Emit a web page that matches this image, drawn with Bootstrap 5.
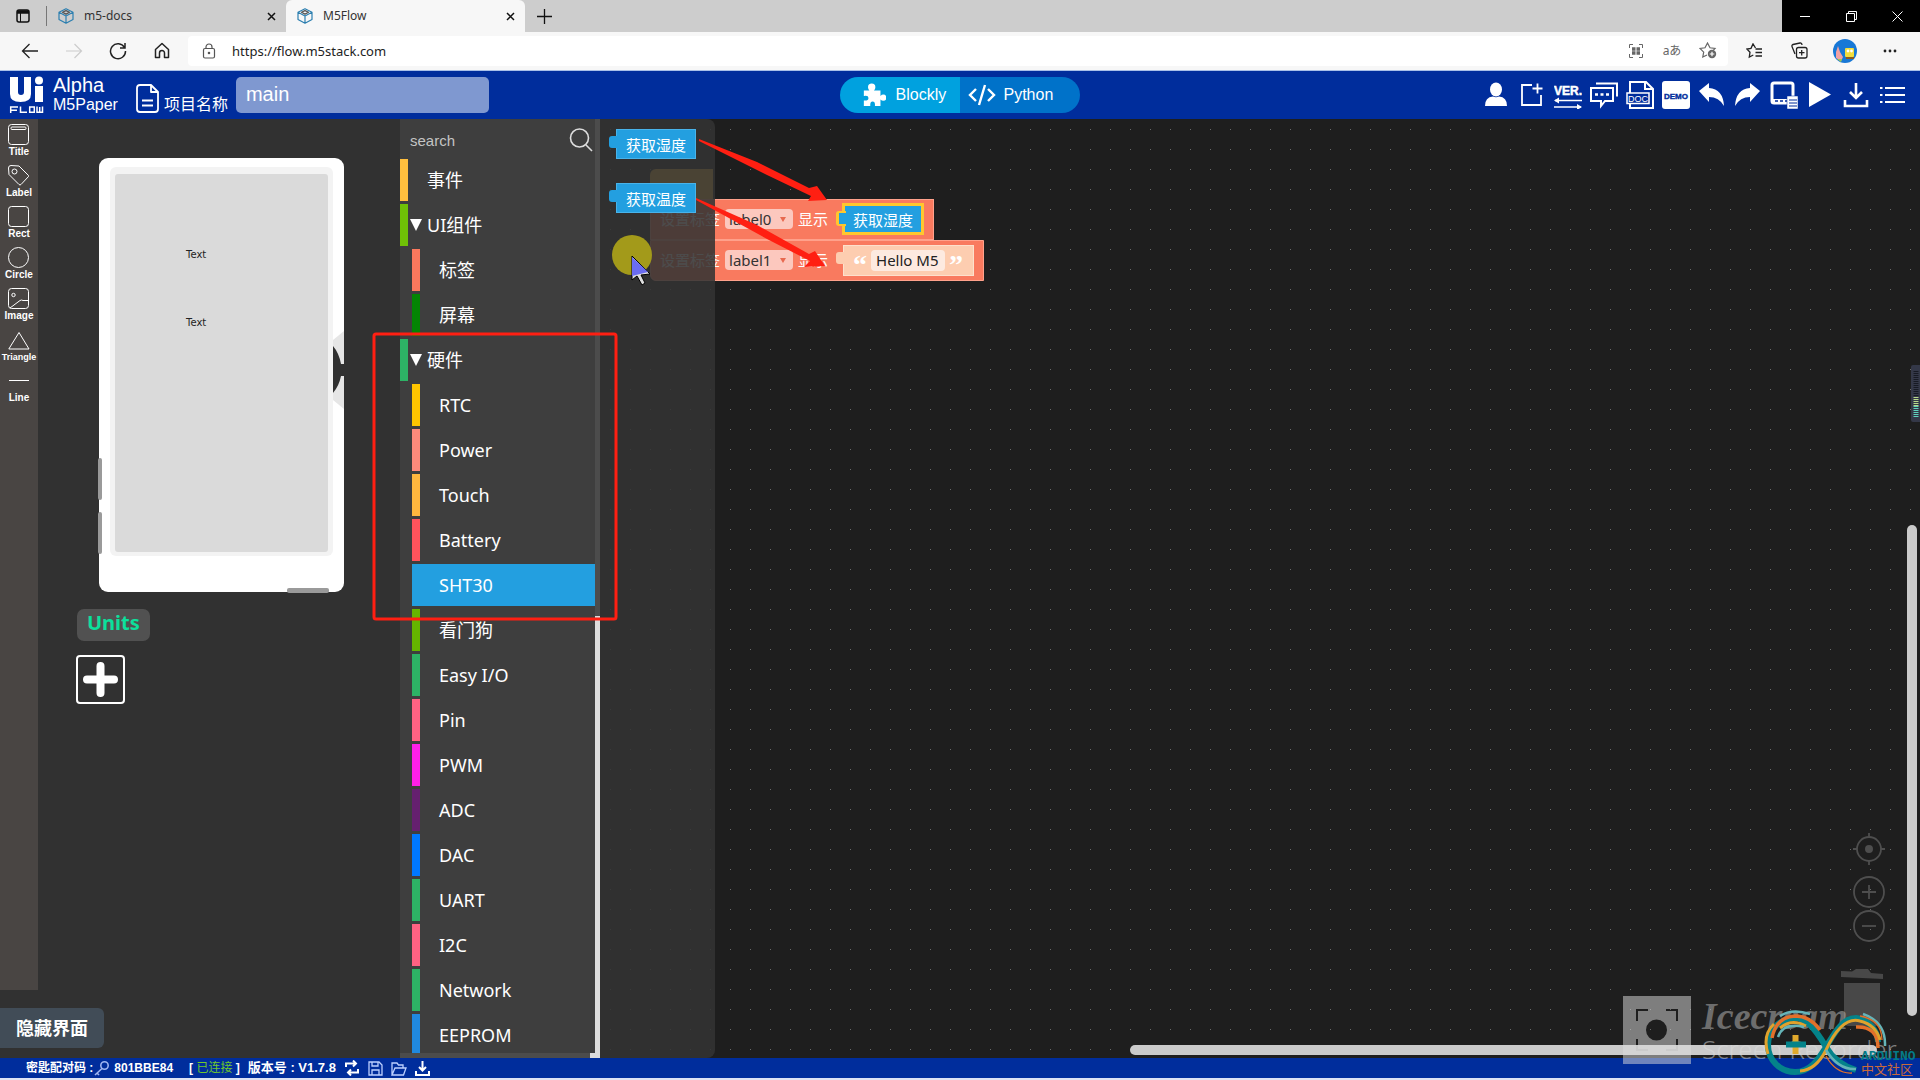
<!DOCTYPE html>
<html lang="zh-CN">
<head>
<meta charset="utf-8">
<meta name="viewport" content="width=device-width, initial-scale=1">
<title>M5Flow</title>
<link rel="stylesheet" href="https://cdn.jsdelivr.net/npm/bootstrap@5.3.0/dist/css/bootstrap.min.css">
<script src="https://cdn.jsdelivr.net/npm/bootstrap@5.3.0/dist/js/bootstrap.bundle.min.js"></script>
<style>
  :root{--ui:"Noto Sans","Noto Sans CJK SC",sans-serif;--arial:"Liberation Sans","Noto Sans CJK SC",sans-serif}
  body{height:100vh;overflow:hidden;background:#1e1e1e;font-family:var(--ui);font-size:12px;line-height:16px}
  svg{display:block;flex:none}
  svg:not([fill]){fill:none}
  svg:not([stroke]){stroke:currentColor}
  button,input{font-family:inherit}
  .plain{background:none;border:0;padding:0;color:inherit;display:flex;align-items:center;justify-content:center}
  /* browser frame */
  .tabstrip{height:32px;background:#cdcdcd;color:#111}
  .tabstrip .lead-btn{width:47px;border-right:1px solid #777;margin:6px 0}
  .tab-item{width:239px;padding:0 10px 0 11px;gap:10px}
  .tab-item.on{background:#f7f7f7;border-radius:6px 6px 0 0}
  .tab-item span{color:#333}
  .winctl{background:#000;color:#fff}
  .winctl button{width:46px;height:32px}
  .toolbar{height:39px;background:#f7f7f7;border-bottom:1px solid #a9c0e8;color:#222}
  .toolbar .nav-b{width:44px}
  .address{height:30px;background:#fff;border-radius:4px;padding:0 2px 0 14px}
  .address input{border:0;outline:0;background:none;font-size:13px;color:#222;padding:0;margin-left:16px}
  .address .small-ic{width:36px;color:#666}
  .rightset{width:192px;padding:0 6px 0 4px}
  .rightset button{width:45px}
  /* app header */
  .apphead{height:48px;background:#002d9c;color:#fff;font-family:var(--arial);padding:0 10px 0 9px}
  .apphead .side{flex:1 1 0}
  .brand{margin:0 18px 0 9px}
  .brand-a{font-size:20px;line-height:20px}
  .brand-b{font-size:16px;line-height:20px}
  .proj{font-size:16px;line-height:20px;padding-top:20px}
  .projname{width:253px;height:36px;border:0;border-radius:5px;background:#7f98d0;color:#fff;font-size:20px;padding:0 10px}
  .mode{width:240px;height:36px;border-radius:18px;overflow:hidden;font-size:16px}
  .mode button{width:120px;color:#fff;justify-content:flex-start}
  .mode .b1{background:#00a1df;padding-left:22px;gap:10px}.mode .b2{background:#0072c9;padding-left:8px;gap:8px}
  .icons button{width:36px;height:36px}
  /* left side */
  .shapes{width:38px;background:#494543;color:#fff;font:bold 10px/12px var(--arial);padding-top:5px;margin-bottom:68px}
  .shapes button{height:41px;flex-direction:column;justify-content:flex-start;font:inherit}
  .designer{width:362px;background:#313131}
  .device{width:245px;height:434px;margin:39px 0 0 61px;background:#fff;border-radius:9px;padding:9px 11px 36px;position:relative}
  .bezel{background:#f3f3f3;border-radius:6px;padding:7px 5px 4px;height:389px}
  .screen{background:#dadada;border-radius:3px;height:378px;position:relative;color:#222;font:10px/12px "DejaVu Sans",sans-serif}
  .screen span{position:absolute;left:71px}
  .screen .t0{top:75px}.screen .t1{top:143px}
  .keyp{position:absolute;background:#9a9a9a;border-radius:2px}
  .k1{left:-1px;top:300px;width:4px;height:42px}.k2{left:-1px;top:354px;width:4px;height:42px}.k3{left:188px;top:430px;width:42px;height:5px}
  .wheel{position:absolute;right:0;top:173px}
  .units{background:#515151;border-radius:7px;color:#0ce09c;font-weight:700;font-size:20px;line-height:28px;padding:0 10px 4px;margin:17px 0 14px 39px;align-self:flex-start}
  .addunit{width:49px;height:49px;border:2px solid #fff;border-radius:4px;margin-left:38px;color:#fff}
  .hide-ui{position:absolute;left:0;bottom:10px;width:104px;height:40px;background:#414c57;color:#fff;border-radius:0 6px 6px 0;font-size:18px;font-weight:700}
  .designer-wrap{position:relative;background:#313131}
  /* toolbox */
  .toolbox{width:200px;background:#3e3e3e;color:#fff;position:relative}
  .searchrow{height:40px;padding:3px 7px 0 10px}
  .searchrow input{min-width:0;background:none;border:0;outline:0;color:#fff;font:15px var(--arial);padding:0}
  .searchrow input::placeholder{color:#c4c4c4;opacity:1}
  .cats{overflow:hidden;gap:3px;margin-bottom:5px;border-radius:0}
  .cats .cat{flex:none;height:42px;border:0;border-left:8px solid var(--c);background:none;color:#fff;font-size:18px;line-height:40px;text-align:left;padding:0 0 0 19px;margin-right:5px}
  .cats .sub{margin-left:12px}
  .cats .open{position:relative}
  .cats .open::before{content:"";position:absolute;left:2px;top:15px;border:6px solid transparent;border-top:12px solid #fff;border-bottom:0}
  .cats .sel{background:#239fe0}
  .vbar{position:absolute;right:0;top:0;bottom:0;width:5px;background:#4c4c4c;overflow:hidden}
  .vbar i{display:block;margin-top:497px;height:100%;background:#dcdcdc}
  .hbar{position:absolute;left:0;right:5px;bottom:0;height:5px;background:#4c4c4c;border-right:5px solid #dcdcdc}
  /* workspace */
  .ws{position:relative;overflow:hidden;background:#1e1e1e conic-gradient(at 1px 1px,transparent 75%,#6a6a6a 0) 10px 10px/20px 20px;min-width:0}
  .blk{position:absolute;display:flex;align-items:center;font-size:15px;white-space:nowrap;color:#fff}
  .hat{left:50px;top:50px;width:63px;height:31px;background:#e8b53e;border-radius:6px 0 0 0}
  .stmt{background:#f97a5f;border:1px solid #ffa18b;gap:5px;padding-left:9px}
  .s1{left:50px;top:80px;width:284px;height:41px}
  .s2{left:50px;top:121px;width:334px;height:41px;border-radius:0 0 0 6px}
  .fld{background:#fcc8be;border-radius:4px;color:#333;height:20px;width:68px;padding:0 7px 0 4px;font-size:15px;line-height:20px;border:0;display:flex;align-items:center;justify-content:space-between}
  .fld::after{content:"";border:3px solid transparent;border-top:5px solid #e8694f;border-bottom:0}
  .val{position:relative;background:#239fe0;border:1px solid #48b3ea;height:30px;padding:2px 10px 0;display:flex;align-items:center;font-size:15px;color:#fff}
  .val::before{content:"";position:absolute;left:-8px;top:6px;width:8px;height:12px;background:inherit;border-radius:3px 0 0 3px}
  .hot{outline:3px solid #ffc72e;outline-offset:-1px;margin-left:11px;height:28px;width:78px;padding:2px 8px 0}
  .hot::before{border:solid #ffc72e;border-width:2px 0 2px 3px;left:-9px;height:15px;top:5px;width:10px}
  .str{background:#fdcdb0;border-color:#fde0cc;margin-left:10px;width:131px;height:31px;gap:4px;padding:0 9px;font:bold 28px/30px "Liberation Serif",serif}
  .str q{quotes:none;height:18px;line-height:28px}
  .str input{width:74px;height:21px;border:0;border-radius:4px;background:#fdeae0;color:#222;font:15px var(--ui);padding:0 0 0 5px}
  .flyout{position:absolute;left:0;top:0;bottom:0;width:115px;background:rgba(51,51,51,.88);border-radius:0 8px 8px 0}
  .flyout .val{position:absolute;left:16px;width:80px;padding:2px 9px 0}
  .flyout .f1{top:10px}.flyout .f2{top:64px}
  .wsv{position:absolute;right:3px;top:406px;bottom:42px;width:10px;border-radius:5px;background:#cbcbcb}
  .wsh{position:absolute;right:43px;left:530px;bottom:3px;height:10px;border-radius:5px;background:#cbcbcb}
  .zooms{position:absolute;right:35px;bottom:115px;color:#4e4e4e}
  .trash{position:absolute;right:36px;bottom:30px}
  .meter{position:absolute;right:0;top:246px}
  .notes{position:absolute;left:0;top:0;pointer-events:none}
  /* footer */
  .foot{height:22px;background:#002d9c;border-bottom:2px solid #dde3f4;color:#fff;font:bold 12px/18px var(--arial);padding-left:26px}
  .marks{position:absolute;right:0;bottom:0;width:320px;height:100px;pointer-events:none}
</style>
</head>
<body class="d-flex flex-column">
<svg width="0" height="0" class="position-absolute"><defs>
  <g id="cube" fill="none" stroke="#2c7fb0" stroke-width="1.2" stroke-linejoin="round"><path d="M8 .8 15 4.300v7.200L8 15.200 1 11.500V4.300zM1 4.300 8 8l7-3.700M8 8v7.200"/><path d="M4.500 4.300 8 2.600l3.500 1.700L8 6.100z" stroke="#555"/></g>
  <g id="cross" stroke="#111" stroke-width="1.500"><path d="M1 1l7 7M8 1 1 8"/></g>
</defs></svg>

<div class="tabstrip d-flex">
  <button class="plain lead-btn" aria-label="标签页操作"><svg width="14" height="14"><rect x="1" y="1" width="12" height="12" rx="2" stroke-width="1.500"/><path d="M1 3h12" stroke-width="3.500"/><path d="M4.500 3v10"/></svg></button>
  <div class="tab-item d-flex align-items-center"><svg width="16" height="16"><use href="#cube"/></svg><span class="flex-grow-1 ms-0">m5-docs</span><button class="plain" aria-label="关闭"><svg width="9" height="9"><use href="#cross"/></svg></button></div>
  <div class="tab-item on d-flex align-items-center"><svg width="16" height="16"><use href="#cube"/></svg><span class="flex-grow-1">M5Flow</span><button class="plain" aria-label="关闭"><svg width="9" height="9"><use href="#cross"/></svg></button></div>
  <button class="plain px-2 ms-1" aria-label="新标签页"><svg width="15" height="15" stroke-width="1.300"><path d="M7.500 0v15M0 7.500h15"/></svg></button>
  <div class="winctl d-flex ms-auto">
    <button class="plain" aria-label="最小化"><svg width="10" height="10"><path d="M0 5.500h10"/></svg></button>
    <button class="plain" aria-label="还原"><svg width="11" height="11"><path d="M.5 2.500h8v8h-8zM2.500 2.500v-2h8v8h-2"/></svg></button>
    <button class="plain" aria-label="关闭窗口"><svg width="11" height="11"><path d="M.5.500l10 10M10.500.500l-10 10"/></svg></button>
  </div>
</div>

<div class="toolbar d-flex align-items-center">
  <div class="d-flex ps-2 me-1">
    <button class="plain nav-b" aria-label="后退"><svg width="18" height="16" stroke-width="1.300"><path d="M17 8H2M8.500 1 1.500 8l7 7"/></svg></button>
    <button class="plain nav-b" disabled aria-label="前进"><svg width="18" height="16" stroke="#ccc" stroke-width="1.200"><path d="M1 8h15M9.500 1l7 7-7 7"/></svg></button>
    <button class="plain nav-b" aria-label="刷新"><svg width="18" height="18" stroke-width="1.500"><path d="M15.500 5.500A7.500 7.500 0 1 0 16.500 9M16 1v5h-5"/></svg></button>
    <button class="plain nav-b" aria-label="主页"><svg width="16" height="17" stroke-width="1.500" stroke-linejoin="round"><path d="M1.500 7.500 8 1.500l6.500 6V15.500h-4V11a2.500 2.500 0 0 0-5 0v4.500h-4z"/></svg></button>
  </div>
  <div class="address d-flex align-items-center flex-grow-1">
    <svg width="14" height="16" stroke="#555" stroke-width="1.200"><rect x="1.500" y="5.500" width="11" height="9.500" rx="1.500"/><path d="M4 5.500V4a3 3 0 0 1 6 0v1.500"/><circle cx="7" cy="10" r=".7"/></svg>
    <input class="flex-grow-1" aria-label="地址" value="https://flow.m5stack.com">
    <button class="plain small-ic" aria-label="二维码"><svg width="14" height="14"><path d="M.5 4V.5H4M10 .5h3.500V4M13.500 10v3.500H10M4 13.500H.5V10"/><path d="M3 5h3.500M7.500 5H11M3 9h3.500M7.500 9H11" stroke-width="3.400"/></svg></button>
    <button class="plain small-ic" aria-label="翻译">aあ</button>
    <button class="plain small-ic" aria-label="收藏"><svg width="18" height="17" stroke-width="1.200"><path d="M14.500 8 16 6.500l-5-.7L8.500 1 6 5.800l-5 .7 3.700 3.700L3.800 15 8 13"/><circle cx="13" cy="12" r="4.200" fill="#666" stroke="none"/><path d="M13 9.700v4.600M10.700 12h4.600" stroke="#fff"/></svg></button>
  </div>
  <div class="rightset d-flex align-items-center">
    <button class="plain" aria-label="收藏夹"><svg width="17" height="16" stroke-width="1.300"><path d="M9.500 5 7 .9 5 5.300.9 6 4 9.200 3.300 14l4-2M9.500 6H16M9.500 9.500H16M9.500 13H16"/></svg></button>
    <button class="plain" aria-label="集锦"><svg width="17" height="17" stroke-width="1.300"><rect x="5.500" y="5.500" width="10.500" height="10.500" rx="2"/><path d="M10.700 8v5.500M8 10.700h5.500M4 12 1 4.500a1.500 1.500 0 0 1 1-2L9 1q1.800-.2 2 2"/></svg></button>
    <button class="plain" aria-label="个人资料"><svg width="24" height="24" stroke="none"><circle cx="12" cy="12" r="12" fill="#1878d6"/><path d="M5 7l2 6 3 5-2 4-5-3 0-6z" fill="#f1a2a4"/><path d="M4 20l5 0-1 3z" fill="#a7c94a"/><rect x="12" y="9" width="9" height="9" rx="1" fill="#f2dd3d"/><path d="M13 18h8v2h-8z" fill="#8a5a22"/><circle cx="15" cy="12" r="1.400" fill="#fff"/><circle cx="18.500" cy="12" r="1.400" fill="#fff"/></svg></button>
    <button class="plain" aria-label="更多"><svg width="14" height="4" stroke="none" fill="#222"><circle cx="2" cy="2" r="1.400"/><circle cx="7" cy="2" r="1.400"/><circle cx="12" cy="2" r="1.400"/></svg></button>
  </div>
</div>

<header class="apphead d-flex align-items-center">
  <div class="side d-flex align-items-center">
    <svg width="35" height="37" stroke="none" fill="#fff" aria-label="UIFlow"><path d="M1 1h8v15q0 3 3 3t3-3V1h7v17q0 8-10.500 8T1 18zM26 10h8v16h-8z"/><circle cx="30" cy="4.500" r="4"/><path d="M1.700 37V31H9M1.700 34.300H8M11.500 30.500v5.700H18M20.700 31h4.600v5.200h-4.600zM28 30.500v5.700h5.500v-5.700M30.700 31v5" fill="none" stroke="#fff" stroke-width="1.500"/></svg>
    <div class="brand"><div class="brand-a">Alpha</div><div class="brand-b">M5Paper</div></div>
    <svg class="mt-2" width="24" height="29" stroke-width="1.800" stroke-linejoin="round"><path d="M15 1H4Q1 1 1 4v21q0 3 3 3h15q3 0 3-3V8zM15 1v7h7M6 16.500h11M6 21.500h11"/></svg>
    <label class="proj ms-1" for="pname">项目名称</label>
    <input class="projname ms-2" id="pname" value="main">
  </div>
  <div class="mode d-flex">
    <button class="plain b1"><svg width="24" height="26" viewBox="0 0 26 26" stroke="none" fill="#fff"><path d="M2 8h6Q6.500 6.500 6.500 4.500a4 4 0 0 1 8 0Q14.500 6.500 13 8h7v6q1.500-1.500 3-1.500a3.300 3.300 0 0 1 0 6.800q-1.500 0-3-1.500V25h-6q.5-5-2.500-5T9 25H2v-6q5 .5 5-2.800T2 14z"/></svg>Blockly</button>
    <button class="plain b2"><svg width="28" height="22" stroke-width="2.400"><path d="M8 5 2 11l6 6M20 5l6 6-6 6M17 1l-6 20"/></svg>Python</button>
  </div>
  <div class="side icons d-flex justify-content-end">
    <button class="plain" aria-label="用户"><svg width="24" height="26" stroke="none" fill="#fff"><ellipse cx="12" cy="7.500" rx="6" ry="7"/><path d="M1 24q0-9 8-9.500 3 1.500 6 0 8 .5 8 9.500z"/></svg></button>
    <button class="plain" aria-label="新建"><svg width="24" height="26" stroke-width="1.800"><path d="M12 3H2v20h19V13M17.500 1.500v10M12.500 6.500h10"/></svg></button>
    <button class="plain" aria-label="版本"><svg width="28" height="28"><text x="0" y="14" font-family="Liberation Sans" font-weight="bold" font-size="12" fill="#fff" stroke="#fff" stroke-width=".5">VER.</text><path d="M1 19.500h27M0 26h27" stroke-width="1.500"/><path d="M5 16.500 0 19.500l5 3zM23 23l5 3-5 3z" fill="#fff" stroke="none"/></svg></button>
    <button class="plain" aria-label="反馈"><svg width="28" height="28" stroke-width="2"><path d="M1 7h22v13h-8l-4 5v-5H1zM6 2.500h21v13"/><path d="M5 13.500h3M10.500 13.500h3M16 13.500h3" stroke-width="2.400"/></svg></button>
    <button class="plain" aria-label="文档"><svg width="28" height="28" stroke-width="2"><path d="M4 12V1h16l7 7v19H4v-4M19 1v7h8"/><rect x="1" y="12" width="22" height="10.500" fill="#002d9c" stroke-width="1.500"/><text x="2" y="21" font-family="Liberation Sans" font-size="9" fill="#fff" stroke="none">DOC</text></svg></button>
    <button class="plain" aria-label="示例"><svg width="28" height="28" stroke="none"><rect width="28" height="28" rx="3" fill="#fff"/><text x="14" y="18" text-anchor="middle" font-family="Liberation Sans" font-weight="bold" font-size="8" fill="#002d9c" stroke="#002d9c" stroke-width=".4">DEMO</text></svg></button>
    <button class="plain" aria-label="撤销"><svg width="26" height="24" stroke="none" fill="#fff"><path d="M0 8 10 0v5q14 1 15 18-5-9-15-9v5z"/></svg></button>
    <button class="plain" aria-label="重做"><svg width="26" height="24" stroke="none" fill="#fff"><path d="M25 8 15 0v5Q1 6 0 23q5-9 15-9v5z"/></svg></button>
    <button class="plain" aria-label="设备"><svg width="28" height="28"><rect x="2" y="2" width="21" height="20" rx="2" stroke-width="3"/><path d="M3 20h20" stroke-width="4"/><path d="M5 20h14" stroke="#002d9c" stroke-width="1.500" stroke-dasharray="3 2"/><rect x="17" y="15" width="11" height="13" fill="#fff" stroke="#002d9c" stroke-width=".5"/><path d="M19 19h8M19 22h8M19 25h8" stroke="#002d9c"/></svg></button>
    <button class="plain" aria-label="运行"><svg width="22" height="25" stroke="none" fill="#fff"><path d="M0 0 22 12.500 0 25z"/></svg></button>
    <button class="plain" aria-label="下载"><svg width="26" height="26" stroke-width="2.600"><path d="M13 1v14M7 10l6 6 6-6M2 18v6h22v-6"/></svg></button>
    <button class="plain" aria-label="菜单"><svg width="25" height="18" stroke-width="2"><path d="M5 2h20M5 9h20M5 16h20M0 2h2.500M0 9h2.500M0 16h2.500"/></svg></button>
  </div>
</header>

<main class="d-flex flex-grow-1 position-relative" style="min-height:0">
  <div class="designer-wrap d-flex">
    <div class="shapes d-flex flex-column">
      <button class="plain"><svg width="22" height="22"><rect x=".5" y=".5" width="20" height="20" rx="3"/><rect x="3" y="3" width="15" height="2.500" rx="1"/></svg><span>Title</span></button>
      <button class="plain"><svg width="22" height="22"><path d="M.5 3q0-2.500 2.500-2.500L11 1l9.500 9.500v1L13 19.500q-1 1-2 0L1 9.500zM4 6.500a2.500 2.500 0 1 0 5 0 2.500 2.500 0 1 0-5 0"/></svg><span>Label</span></button>
      <button class="plain"><svg width="22" height="22"><rect x=".5" y=".5" width="20" height="20" rx="3"/></svg><span>Rect</span></button>
      <button class="plain"><svg width="22" height="22"><circle cx="10.500" cy="10.500" r="10"/></svg><span>Circle</span></button>
      <button class="plain"><svg width="22" height="22"><rect x=".5" y=".5" width="20" height="20" rx="3"/><circle cx="5.500" cy="7" r="1.700"/><path d="M2 20 12 12.500q1.500-1 3 0h5.500"/></svg><span>Image</span></button>
      <button class="plain"><svg width="22" height="22"><path d="M11 3.500 21 20H.8z"/></svg><span style="font-size:9px">Triangle</span></button>
      <button class="plain"><svg width="22" height="22"><path d="M1 10.500h20"/></svg><span>Line</span></button>
    </div>
    <div class="designer d-flex flex-column">
      <div class="device">
        <div class="bezel"><div class="screen"><span class="t0">Text</span><span class="t1">Text</span></div></div>
        <i class="keyp k1"></i><i class="keyp k2"></i><i class="keyp k3"></i>
        <svg class="wheel" width="11" height="78" stroke="none"><path d="M11 0 0 9v60l11 9z" fill="#e6e6e6"/><path d="M0 15q6 7 8 18h3v12H8Q6 55 0 62z" fill="#313131"/></svg>
      </div>
      <span class="units">Units</span>
      <button class="plain addunit" aria-label="添加单元"><svg width="37" height="37" stroke-width="8" stroke-linecap="round"><path d="M18.500 5v27M5 18.500h27"/></svg></button>
    </div>
    <button class="plain hide-ui">隐藏界面</button>
  </div>

  <aside class="toolbox d-flex flex-column">
    <div class="searchrow d-flex align-items-center">
      <input class="flex-grow-1" type="text" placeholder="search" aria-label="search">
      <svg width="24" height="24" stroke="#ddd" stroke-width="1.600"><circle cx="10.500" cy="10" r="9"/><path d="M17 17l6 6"/></svg>
    </div>
    <div class="cats list-group flex-grow-1">
      <button class="cat" style="--c:#ffbf3e">事件</button>
      <button class="cat open" style="--c:#6fc106">UI组件</button>
      <button class="cat sub" style="--c:#fb785d">标签</button>
      <button class="cat sub" style="--c:#038503">屏幕</button>
      <button class="cat open" style="--c:#2db265">硬件</button>
      <button class="cat sub" style="--c:#ffc500">RTC</button>
      <button class="cat sub" style="--c:#fd8a7b">Power</button>
      <button class="cat sub" style="--c:#ffb73e">Touch</button>
      <button class="cat sub" style="--c:#ff535c">Battery</button>
      <button class="cat sub sel" style="--c:#239fe0">SHT30</button>
      <button class="cat sub" style="--c:#65b500">看门狗</button>
      <button class="cat sub" style="--c:#2db265">Easy I/O</button>
      <button class="cat sub" style="--c:#ff6283">Pin</button>
      <button class="cat sub" style="--c:#ff1fe8">PWM</button>
      <button class="cat sub" style="--c:#65206f">ADC</button>
      <button class="cat sub" style="--c:#0078ff">DAC</button>
      <button class="cat sub" style="--c:#2db265">UART</button>
      <button class="cat sub" style="--c:#ff6283">I2C</button>
      <button class="cat sub" style="--c:#2db265">Network</button>
      <button class="cat sub" style="--c:#2089e0">EEPROM</button>
    </div>
    <div class="vbar"><i></i></div><div class="hbar"></div>
  </aside>

  <section class="ws flex-grow-1">
    <div class="blk hat"></div>
    <div class="blk stmt s1"><span>设置标签</span><button class="fld">label0</button><span>显示</span><div class="val hot">获取湿度</div></div>
    <div class="blk stmt s2"><span>设置标签</span><button class="fld">label1</button><span>显示</span><div class="val str"><q>“</q><input aria-label="文本" value="Hello M5"><q>”</q></div></div>
    <div class="flyout">
      <div class="val f1">获取湿度</div>
      <div class="val f2">获取温度</div>
    </div>
    <svg class="zooms" width="32" height="110" stroke-width="1.800"><circle cx="16" cy="16" r="12"/><circle cx="16" cy="16" r="4" fill="currentColor" stroke="none"/><path d="M16 0v4M16 28v4M0 16h4M28 16h4"/><circle cx="16" cy="59" r="15"/><path d="M9 59h14M16 52v14"/><circle cx="16" cy="93" r="15"/><path d="M9 93h14"/></svg>
    <svg class="trash" width="44" height="60" stroke="none" fill="#484848"><path d="M1 3l11 .5 4-2.500h12l3 4 12 1v5L1 9zM4 15h36v38q0 5-5 5H9q-5 0-5-5z"/></svg>
    <div class="wsv"></div><div class="wsh"></div>
    <svg class="meter" width="9" height="57"><rect width="12" height="57" rx="2" fill="#343848" stroke="none"/><path d="M5 6v26" stroke="#171a24" stroke-width="5" stroke-dasharray="1 1"/><path d="M5 32v9" stroke="#b8d98a" stroke-width="5" stroke-dasharray="1 1"/><path d="M5 41v11" stroke="#5fd2bd" stroke-width="5" stroke-dasharray="1 1"/></svg>
  </section>

  <!-- tutorial annotations over the editor -->
  <svg class="notes" width="1000" height="520" stroke="none">
    <circle cx="632" cy="136" r="20" fill="#a39a1a"/>
    <g fill="#ff1f12"><path d="M699 20 757 43 809 69 817 67 827 81 808 82 811 77 767 56 699 22z"/><path d="M696 79 757 106 809 135 815 132 825 147 804 148 810 142 767 120 696 81z"/></g>
    <path d="M632 137v24l5-4 5 9 3-2-4-8 9-1z" fill="#ddd" stroke="#000"/><path d="M632 138v19l16-4z" fill="#6a6cf0"/>
    <rect x="374" y="215" width="242" height="285" rx="2" fill="none" stroke="#ff1f12" stroke-width="3"/>
  </svg>
</main>

<footer class="foot d-flex align-items-center">
  <span>密匙配对码 :</span>
  <svg width="17" height="15" stroke="#9fb6f2" stroke-width="1.600"><circle cx="11.500" cy="4.500" r="3.700"/><path d="M9 7.500 2 14M4 12l2 2"/></svg>
  <span class="ms-1">801BBE84</span>
  <span class="ms-3">[ <span class="fw-normal" style="color:#6fc82c">已连接</span> ]</span>
  <span class="ms-2" style="font-size:13px">版本号 : V1.7.8</span>
  <div class="d-flex align-items-center gap-2 ms-2">
    <svg width="16" height="16" stroke-width="2"><path d="M2 7V3.500h9M14 9v3.500H5M9 .5l3 3-3 3M7 9.500l-3 3 3 3"/></svg>
    <svg width="15" height="15" stroke="#bcd0ff" stroke-width="1.300"><path d="M1 1h10l3 3v10H1zM4 1v4h6V1M4 14V9h7v5"/></svg>
    <svg width="16" height="15" stroke="#bcd0ff" stroke-width="1.300"><path d="M1 14V2h5l1.500 2H12v3M1 14 4 7h11l-2.500 7z"/></svg>
    <svg width="15" height="15" stroke-width="2"><path d="M7.500 0v9M4 6l3.500 3.500L11 6M1 10v4h13v-4"/></svg>
  </div>
</footer>

<!-- recorder and community watermarks -->
<svg class="marks" viewBox="-20 0 320 100" stroke="none">
  <g opacity=".5"><path fill="#ddd" fill-rule="evenodd" d="M3 16h68v68H3zM47 50a10.500 10.500 0 1 0-21 0 10.500 10.500 0 1 0 21 0M16 29v12h2V31h10v-2zM58 29H46v2h10v10h2zM16 71V59h2v10h10v2zM58 71H46v-2h10V59h2z"/>
  <text x="82" y="49" font-family="Liberation Serif" font-style="italic" font-weight="bold" font-size="38" fill="#bbb">Icecream</text>
  <text x="82" y="79" font-family="Noto Sans" font-weight="300" font-size="26" fill="#ddd">Screen Recorder</text></g>
  <g fill="none">
    <path d="M206 67C193 45 185 38 175 38A27 27 0 0 0 175 92C190 92 198 80 206 67S222 38 236 38A25 25 0 0 1 258 62M206 67Q216 84 236 90" stroke="#04838a" stroke-width="6"/>
    <path d="M200 50Q190 36 175 36 156 37 152 58M258 68Q258 46 236 47" stroke="#e2702a" stroke-width="3.500"/>
    <path d="M148 74Q142 55 154 44M180 91Q196 90 206 70 222 36 240 41 256 45 260 60M160 48Q172 38 186 46" stroke="#e0a22c" stroke-width="3"/>
    <path d="M158 57Q163 42 184 47M206 70Q218 90 236 89M160 36Q172 28 190 34M243 34Q266 42 265 66" stroke="#65b4b8" stroke-width="2.500"/>
    <path d="M206 76Q216 94 232 93M240 36Q262 40 262 60" stroke="#e2702a" stroke-width="1.300"/>
    <path d="M175.500 55v19" stroke="#e0a92c" stroke-width="6"/><path d="M166 64.500h20" stroke="#04838a" stroke-width="6"/>
  </g>
  <text x="241" y="80" font-family="Liberation Mono" font-weight="bold" font-size="13" fill="#047a86">ARDUINO</text>
  <text x="241" y="94" font-family="Noto Sans CJK SC" font-size="13" fill="#c96a3c">中文社区</text>
</svg>
</body>
</html>
